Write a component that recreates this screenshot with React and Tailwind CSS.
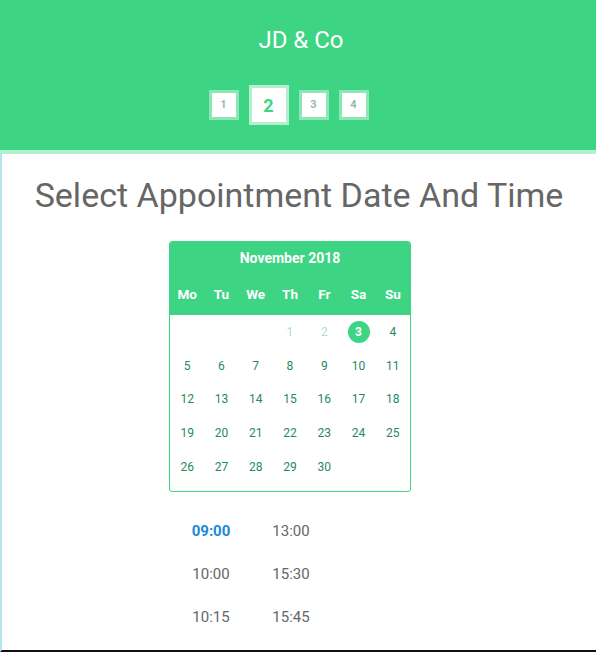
import { useState } from 'react'

const days = ['Mo', 'Tu', 'We', 'Th', 'Fr', 'Sa', 'Su']
const times = [['09:00', '13:00'], ['10:00', '15:30'], ['10:15', '15:45']]

function buildCells() {
  const cells = [null, null, null]
  for (let d = 1; d <= 30; d++) cells.push(d)
  while (cells.length % 7) cells.push(null)
  return cells
}

function Step({ n, active }) {
  if (active) {
    return (
      <div className="w-10 h-10 bg-white border-[3px] border-[#b6efcf] flex items-center justify-center text-[18px] font-bold text-[#3dd584]">
        {n}
      </div>
    )
  }
  return (
    <div className="w-[30px] h-[30px] bg-white border-[3px] border-[#8de6b5] flex items-center justify-center text-[11px] font-bold text-[#9ab8ad]">
      {n}
    </div>
  )
}

export default function App() {
  const [selected, setSelected] = useState(3)
  const [time, setTime] = useState('09:00')
  const cells = buildCells()

  return (
    <div className="w-[596px] h-[652px] overflow-hidden bg-white flex flex-col" style={{ fontFamily: 'Roboto, "Liberation Sans", sans-serif' }}>
      <header className="h-[150px] bg-[#3dd584] flex flex-col items-center shrink-0">
        <h1 className="mt-[26px] ml-[6px] text-[24px] leading-[28px] text-white">JD &amp; Co</h1>
        <div className="mt-[31px] mr-[19px] flex items-center gap-[10px]">
          <Step n={1} />
          <Step n={2} active />
          <Step n={3} />
          <Step n={4} />
        </div>
      </header>
      <div className="h-[4px] bg-[#b6efcf] shrink-0" />

      <main className="flex-1 border-l-2 border-[#b3e3ee] border-b-2 border-b-[#111] flex flex-col items-center">
        <h2 className="mt-[21px] text-[34px] leading-[40px] text-[#666]">Select Appointment Date And Time</h2>

        <div className="mr-[18px] w-[242px]">
          <div className="mt-[26px] border border-[#3dd584] rounded-[3px] overflow-hidden">
            <div className="bg-[#3dd584] text-white">
              <div className="h-[33px] flex items-center justify-center text-[14px] font-bold">November 2018</div>
              <div className="grid grid-cols-7 h-[40px] items-center text-[13.5px] font-bold text-center pb-[2px]">
                {days.map((d) => <span key={d}>{d}</span>)}
              </div>
            </div>
            <div className="grid grid-cols-7 pb-[7px]">
              {cells.map((d, i) => (
                <div key={i} className="h-[33.75px] flex items-center justify-center">
                  {d && (
                    <button
                      onClick={() => d > 2 && setSelected(d)}
                      className={
                        d === selected
                          ? 'w-[22px] h-[22px] rounded-full bg-[#3dd584] text-white text-[12px] font-bold flex items-center justify-center'
                          : d < 3
                            ? 'text-[12px] text-[#b4dccc]'
                            : 'text-[12px] text-[#1f8a5f]'
                      }
                    >
                      {d}
                    </button>
                  )}
                </div>
              ))}
            </div>
          </div>

          <div className="mt-[28px] pl-[2px] flex flex-col gap-[20px] text-[15px] leading-[23px]">
            {times.map((row) => (
              <div key={row[0]} className="flex">
                {row.map((t) => (
                  <button
                    key={t}
                    onClick={() => setTime(t)}
                    className={`w-[80px] text-center ${t === time ? 'font-bold text-[#1b8bd6]' : 'text-[#666]'}`}
                  >
                    {t}
                  </button>
                ))}
              </div>
            ))}
          </div>
        </div>
      </main>
    </div>
  )
}
